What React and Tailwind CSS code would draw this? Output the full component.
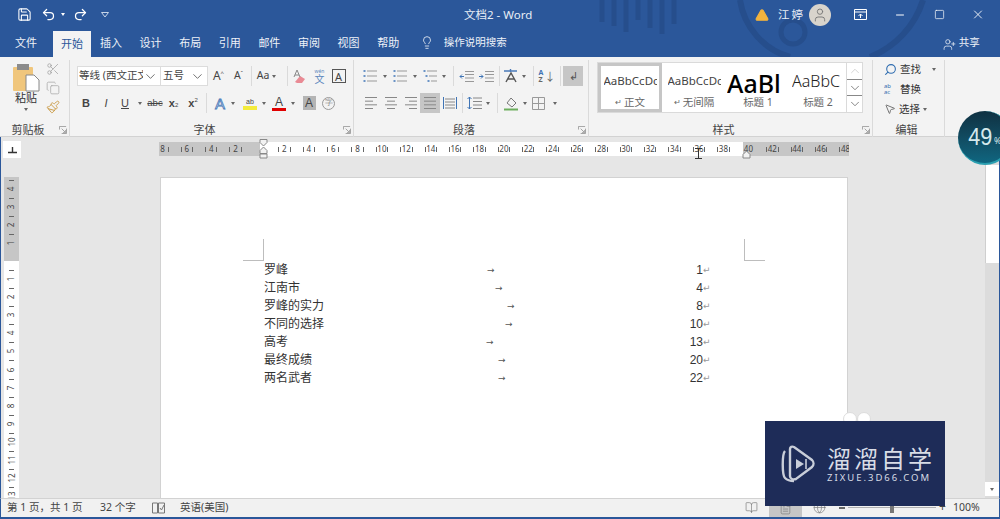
import React from "react";
import { Save, Undo2, Redo2, Lightbulb, Scissors, Copy, Paintbrush, Search, MousePointer2, X, Minus, Square, ChevronDown, ChevronUp, TriangleAlert, User, UserPlus, BookOpen, FileText, Globe } from "lucide-react";

const TABS = ["插入", "设计", "布局", "引用", "邮件", "审阅", "视图", "帮助"];

const DOC = [
  { t: "罗峰", w: "w-[223px]", n: "1" },
  { t: "江南市", w: "w-[231px]", n: "4" },
  { t: "罗峰的实力", w: "w-[243px]", n: "8" },
  { t: "不同的选择", w: "w-[241px]", n: "10" },
  { t: "高考", w: "w-[222px]", n: "13" },
  { t: "最终成绩", w: "w-[234px]", n: "20" },
  { t: "两名武者", w: "w-[234px]", n: "22" },
];

const Dd = () => <span className="inline-block h-0 w-0 border-x-[2.5px] border-t-[3px] border-x-transparent border-t-[#666]" />;

function Slot({ w, children, className = "" }) {
  return <span className={`flex h-[20px] shrink-0 items-center justify-center ${w} ${className}`}>{children}</span>;
}

const Sep = ({ ml }) => <span className={`h-[20px] w-px shrink-0 bg-[#dadada] ${ml}`} />;

function Lines({ rows }) {
  // little paragraph glyph, rows = [x1, x2] per line
  return (
    <svg width="14" height="14" viewBox="0 0 14 14" stroke="#888" strokeWidth="1">
      {rows.map((r, i) => <line key={i} x1={r[0]} x2={r[1]} y1={1.5 + i * (11 / (rows.length - 1))} y2={1.5 + i * (11 / (rows.length - 1))} />)}
    </svg>
  );
}

function ListIcon({ marks }) {
  return (
    <svg width="14" height="14" viewBox="0 0 14 14">
      {[2, 7, 12].map((y, i) => (
        <g key={y}>
          <rect x={marks * i + 0.5} y={y - 1} width="2" height="2" fill="#6b93c6" />
          <line x1={marks * i + 4} x2="14" y1={y} y2={y} stroke="#999" />
        </g>
      ))}
    </svg>
  );
}

function Group({ w, label, pad = "pr-[14px]", launcher = true, children }) {
  return (
    <div className={`flex h-[77px] shrink-0 flex-col border-r border-[#dadada] ${w}`}>
      <div className="h-[62px]">{children}</div>
      <div className={`relative flex-1 pt-px text-center text-[11px] leading-[14px] text-[#444] ${pad}`}>
        {label}
        {launcher && (
          <svg className="absolute bottom-[3px] right-[2px]" width="8" height="8" viewBox="0 0 9 9" fill="none" stroke="#999">
            <path d="M.5 4V.5H8M8.5 3v5.5H3M3 3l4 4M4.5 7.5h3v-3" />
          </svg>
        )}
      </div>
    </div>
  );
}

function StyleItem({ sample, label, mark, first, big }) {
  return (
    <div className={`flex h-full w-[64px] shrink-0 flex-col items-center overflow-hidden ${first ? "border-[3px] border-[#c6c6c6] pt-[5px]" : "pt-[8px]"}`}>
      <div className={`h-[24px] w-[53px] overflow-hidden whitespace-nowrap ${big ? "-ml-[9px] text-[25px] font-medium leading-[24px] text-black" : "text-[11.5px] leading-[20px] text-[#444]"} [font-family:'Noto_Sans',sans-serif]`}>{sample}</div>
      <div className="flex items-center text-[10.5px] leading-[14px] text-[#666]">
        {mark && <span className="mr-[2px] text-[8px]">↵</span>}
        {label}
      </div>
    </div>
  );
}

function HRuler() {
  const Cell = ({ n }) => (
    <span className="relative flex w-[24.4px] shrink-0 justify-center">
      <span className="absolute left-[6px] top-[5px] h-[5px] w-px bg-[#666]" />
      <span className="absolute right-[6px] top-[5px] h-[5px] w-px bg-[#666]" />
      {n}
    </span>
  );
  return (
    <div className="relative ml-[138px] mt-[5px] flex h-[14px] w-[690px] text-[8px] leading-[14px] text-[#444]">
      <div className="flex w-[101px] shrink-0 justify-end overflow-hidden bg-[#c6c6c6]">
        {[8, 6, 4, 2].map(n => <Cell key={n} n={n} />)}
        <span className="w-[12.2px] shrink-0" />
      </div>
      <div className="flex w-[483px] shrink-0 overflow-hidden bg-white">
        <span className="w-[12.2px] shrink-0" />
        {[2, 4, 6, 8, 10, 12, 14, 16, 18, 20, 22, 24, 26, 28, 30, 32, 34, 36, 38].map(n => <Cell key={n} n={n} />)}
      </div>
      <div className="flex w-[106px] shrink-0 overflow-hidden bg-[#c6c6c6]">
        <span className="flex w-[10px] shrink-0 justify-end">40</span>
        <span className="w-[7.2px] shrink-0" />
        {[42, 44, 46, 48].map(n => <Cell key={n} n={n} />)}
      </div>
      {/* indent markers */}
      <svg className="absolute left-[100px] top-[-3px]" width="9" height="22" viewBox="0 0 9 22" fill="#f2f2f2" stroke="#888">
        <path d="M1 .5h7v3L4.500 7 1 3.500z" />
        <path d="M4.500 8L8 11.500v3H1v-3z" />
        <path d="M1 15h7v4H1z" />
      </svg>
      <svg className="absolute left-[583px] top-[8px]" width="9" height="9" viewBox="0 0 9 9" fill="#f2f2f2" stroke="#888">
        <path d="M4.500 1L8 4.500V8H1V4.500z" />
      </svg>
      {/* text cursor */}
      <svg className="absolute left-[536px] top-[6px]" width="7" height="11" viewBox="0 0 7 11" fill="none" stroke="#333">
        <path d="M0 .5h7M3.500 .5v10M0 10.500h7" />
      </svg>
    </div>
  );
}

function VRuler() {
  const Cell = ({ n }) => (
    <span className="relative flex h-[18.1px] shrink-0 items-center justify-center">
      <span className="absolute left-[5px] top-0 h-px w-[5px] bg-[#666]" />
      <span className="-rotate-90">{n}</span>
    </span>
  );
  return (
    <div className="ml-[3px] flex h-[321px] w-[15px] shrink-0 flex-col overflow-hidden text-[8px] leading-[8px] text-[#444]">
      <div className="flex h-[84px] shrink-0 flex-col justify-end bg-[#c6c6c6] pb-[9px]">
        {[4, 3, 2, 1].map(n => <Cell key={n} n={n} />)}
      </div>
      <div className="flex-1 bg-white pt-[9px]">
        {[1, 2, 3, 4, 5, 6, 7, 8, 9, 10, 11, 12, 13].map(n => <Cell key={n} n={n} />)}
      </div>
    </div>
  );
}

export default function App() {
  return (
    <div className="relative flex h-[519px] w-[1000px] flex-col overflow-hidden bg-[#e6e6e6] text-[#333] [font-family:'Noto_Sans','Noto_Sans_CJK_SC',sans-serif]">
      {/* title bar + tabs */}
      <div className="relative h-[57px] shrink-0 bg-[#2b579a] text-white">
        <svg className="absolute left-[590px] top-0" width="350" height="57" viewBox="0 0 350 57" fill="none" stroke="#264e8c">
          <g strokeWidth="5">
            <path d="M12 0v22M24 0v26M36 0v32M48 0v20M60 0v28M72 0v34M84 0v24" />
          </g>
          <circle cx="203" cy="32" r="12" strokeWidth="5" />
          <path d="M150 0a70 70 0 0 0 50 57M333 0a90 90 0 0 1-53 57" strokeWidth="6" />
        </svg>
        <div className="relative flex h-[29px] items-center">
          <Slot w="w-[16px]" className="ml-[16px]"><Save size={15} strokeWidth={1.7} /></Slot>
          <Slot w="w-[16px]" className="ml-[8px]"><Undo2 size={15} strokeWidth={2} /></Slot>
          <Slot w="w-[6px]" className="ml-[4px]"><span className="inline-block h-0 w-0 border-x-[2.5px] border-t-[3px] border-x-transparent border-t-white" /></Slot>
          <Slot w="w-[16px]" className="ml-[6px]"><Redo2 size={15} strokeWidth={2} /></Slot>
          <Slot w="w-[8px]" className="ml-[13px]">
            <svg width="8" height="6" viewBox="0 0 8 6" fill="none" stroke="#c6d4e8"><path d="M.5.5h7L4 5z" /></svg>
          </Slot>
          <div className="ml-[355px] w-[71px] whitespace-nowrap text-[11.5px] text-[#e8eef6]">文档2 - Word</div>
          <Slot w="w-[14px]" className="ml-[220px]"><TriangleAlert size={14} fill="#f2b33d" stroke="#f2b33d" /></Slot>
          <span className="ml-[9px] text-[11.5px] tracking-[2px] text-[#e8eef6]">江婷</span>
          <span className="ml-[4px] flex h-[22px] w-[22px] items-center justify-center rounded-full bg-[#d8d4cc]"><User size={16} stroke="#777" strokeWidth={1.4} /></span>
          <Slot w="w-[14px]" className="ml-[22px]">
            <svg width="13" height="11" viewBox="0 0 13 11" fill="none" stroke="#fff"><path d="M.5.5h12v10H.5zM.5 3h12" /><path d="M6.5 9V5M4.5 7l2-2 2 2" /></svg>
          </Slot>
          <Slot w="w-[12px]" className="ml-[27px]"><Minus size={12} /></Slot>
          <Slot w="w-[11px]" className="ml-[28px]"><Square size={11} strokeWidth={1.5} /></Slot>
          <Slot w="w-[14px]" className="ml-[26px]"><X size={15} strokeWidth={1.5} /></Slot>
        </div>
        <div className="relative flex h-[28px] items-end text-[11px] text-[#eef2f8]">
          <span className="mb-[6px] ml-[15px] w-[38px]">文件</span>
          <span className="flex h-[26px] w-[38px] items-center justify-center bg-[#f3f3f3] text-[#2b579a]">开始</span>
          {TABS.map(t => <span key={t} className="mb-[6px] w-[39.6px] pl-[9px]">{t}</span>)}
          <Slot w="w-[14px]" className="mb-[5px] ml-[12px]"><Lightbulb size={15} strokeWidth={1.4} /></Slot>
          <span className="mb-[6px] ml-[10px] text-[10.5px]">操作说明搜索</span>
          <UserPlus className="mb-[6px] ml-[436px]" size={13} strokeWidth={1.4} />
          <span className="mb-[6px] ml-[3px] text-[10.5px]">共享</span>
        </div>
      </div>

      {/* ribbon */}
      <div className="flex h-[80px] shrink-0 border-b border-[#d2d2d2] bg-[#f3f3f3] pt-[3px] text-[#444]">
        <Group w="w-[70px]" label="剪贴板" pad="pr-[13px]">
          <div className="flex">
            <div className="ml-[12px] flex w-[28px] flex-col items-center">
              <svg className="mt-[3px]" width="28" height="29" viewBox="0 0 28 29">
                <rect x="1" y="4" width="20" height="24" rx="1" fill="#f0c67c" />
                <rect x="5" y="1" width="12" height="6" fill="#8b8b8b" />
                <path d="M14 12h8l5 5v11H14z" fill="#fff" stroke="#888" />
              </svg>
              <span className="-mt-px whitespace-nowrap text-[11px] leading-[14px] text-[#333]">粘贴</span>
              <span className="mt-[3px] flex"><Dd /></span>
            </div>
            <div className="ml-[5px] flex w-[16px] flex-col items-center gap-[5px] pt-[2px]">
              <Scissors size={14} stroke="#a0a0a0" strokeWidth={1.3} />
              <Copy size={14} stroke="#a8a8a8" strokeWidth={1.3} />
              <Paintbrush size={14} stroke="#c99a45" strokeWidth={1.6} />
            </div>
          </div>
        </Group>

        <Group w="w-[284px]" label="字体">
          <div className="flex pl-[7px] pt-[6px]">
            <div className="flex h-[20px] w-[84px] shrink-0 items-center justify-between border border-[#dcdcdc] bg-white pl-[1px] pr-[2px] text-[10.5px]">
              <span className="w-[64px] overflow-hidden whitespace-nowrap">等线 (西文正文)</span>
              <ChevronDown size={15} strokeWidth={1.2} />
            </div>
            <div className="flex h-[20px] w-[47px] shrink-0 items-center justify-between border border-l-0 border-[#dcdcdc] bg-white pl-[2px] pr-[2px] text-[10.5px]">
              五号 <ChevronDown size={15} strokeWidth={1.2} />
            </div>
            <Slot w="w-[21px]" className="text-[12px]">A<span className="-mt-[6px] text-[6px]">^</span></Slot>
            <Slot w="w-[19px]" className="text-[10.5px]">A<span className="-mt-[6px] text-[6px]">ˇ</span></Slot>
            <Sep ml="ml-[3px]" />
            <Slot w="w-[29px]" className="gap-[3px] text-[10.5px]">Aa <Dd /></Slot>
            <Sep ml="ml-[6px]" />
            <Slot w="w-[20px]" className="ml-[2px]">
              <svg width="14" height="14" viewBox="0 0 14 14"><path d="M2 13l5-6 5 3-3 4H4z" fill="#e98a94" /><path d="M1 8l3-7 3 7M2 6h4" fill="none" stroke="#888" /></svg>
            </Slot>
            <Slot w="w-[19px]">
              <span className="flex flex-col items-center text-[#5b87bd]"><span className="text-[5px] leading-[6px]">wén</span><span className="text-[10px] leading-[11px]">文</span></span>
            </Slot>
            <Slot w="w-[19px]"><span className="flex h-[14px] w-[14px] items-center justify-center border border-[#555] text-[11px] leading-none">A</span></Slot>
          </div>
          <div className="mt-[7px] flex pl-[6px] [font-family:'Liberation_Sans',sans-serif]">
            <Slot w="w-[20px]" className="text-[11px] font-bold">B</Slot>
            <Slot w="w-[20px]" className="text-[11px] italic">I</Slot>
            <Slot w="w-[18px]" className="text-[11px] underline">U</Slot>
            <Slot w="w-[12px]"><Dd /></Slot>
            <Slot w="w-[18px]" className="text-[9.5px] line-through">abc</Slot>
            <Slot w="w-[19px]" className="text-[11px] font-bold">x<span className="mt-[5px] text-[6px] font-normal">2</span></Slot>
            <Slot w="w-[20px]" className="text-[11px] font-bold">x<span className="-mt-[6px] text-[6px] font-normal">2</span></Slot>
            <Sep ml="ml-[3px]" />
            <Slot w="w-[20px]" className="ml-[3px]">
              <span className="text-[15px] leading-none text-[#dfe9f6] [-webkit-text-stroke:0.8px_#4a7ab8]">A</span>
            </Slot>
            <Slot w="w-[6px]"><Dd /></Slot>
            <Slot w="w-[20px]" className="ml-[4px]">
              <span className="flex flex-col items-center text-[7px] leading-[9px]">ab<span className="h-[4px] w-[14px] bg-[#f4ec3c]" /></span>
            </Slot>
            <Slot w="w-[8px]"><Dd /></Slot>
            <Slot w="w-[20px]" className="ml-px">
              <span className="flex flex-col items-center text-[12px] leading-[12px]">A<span className="h-[3px] w-[14px] bg-[#e00000]" /></span>
            </Slot>
            <Slot w="w-[8px]"><Dd /></Slot>
            <Slot w="w-[20px]" className="ml-[2px]"><span className="flex h-[14px] w-[13px] items-center justify-center bg-[#b4b4b4] text-[12px]">A</span></Slot>
            <Slot w="w-[19px]"><span className="flex h-[13px] w-[13px] items-center justify-center rounded-full border border-[#999] text-[8px] text-[#888]">字</span></Slot>
          </div>
        </Group>

        <Group w="w-[235px]" label="段落">
          <div className="flex pl-[8px] pt-[6px]">
            <Slot w="w-[16px]"><ListIcon marks={0} /></Slot>
            <Slot w="w-[14px]"><Dd /></Slot>
            <Slot w="w-[16px]"><ListIcon marks={0} /></Slot>
            <Slot w="w-[14px]"><Dd /></Slot>
            <Slot w="w-[16px]"><ListIcon marks={2} /></Slot>
            <Slot w="w-[12px]"><Dd /></Slot>
            <Sep ml="ml-[3px]" />
            <Slot w="w-[20px]" className="ml-[2px]">
              <svg width="15" height="13" viewBox="0 0 15 13" stroke="#999"><path d="M6 1.5h9M6 4.5h9M6 8h9M6 11.5h9" /><path d="M5 6.5H1M3 4.5l-2 2 2 2" stroke="#3f74b5" fill="none" /></svg>
            </Slot>
            <Slot w="w-[20px]">
              <svg width="15" height="13" viewBox="0 0 15 13" stroke="#999"><path d="M6 1.5h9M6 4.5h9M6 8h9M6 11.5h9" /><path d="M0 6.5h4M2 4.5l2 2-2 2" stroke="#3f74b5" fill="none" /></svg>
            </Slot>
            <Sep ml="ml-[3px]" />
            <Slot w="w-[20px]">
              <svg width="15" height="14" viewBox="0 0 15 14" fill="none" stroke="#555" strokeWidth="1.4"><path d="M3 13L8 4l5 9M5 10h6" /><path d="M1 2h13M7.500 0v3" stroke="#4a7ab8" /></svg>
            </Slot>
            <Slot w="w-[8px]"><Dd /></Slot>
            <Sep ml="ml-[5px]" />
            <Slot w="w-[20px]" className="ml-[3px]">
              <span className="flex flex-col text-[7px] font-bold leading-[7px] text-[#3f74b5]">A<span className="text-[#666]">Z</span></span>
              <span className="ml-[1px] text-[11px] leading-none text-[#666]">↓</span>
            </Slot>
            <Sep ml="ml-[3px]" />
            <Slot w="w-[20px]" className="ml-[2px] bg-[#c6c6c6] text-[11px] text-[#555]">↲</Slot>
          </div>
          <div className="mt-[7px] flex pl-[7px]">
            <Slot w="w-[20px]"><Lines rows={[[1, 13], [1, 9], [1, 13], [1, 9]]} /></Slot>
            <Slot w="w-[20px]"><Lines rows={[[1, 13], [3, 11], [1, 13], [3, 11]]} /></Slot>
            <Slot w="w-[19px]"><Lines rows={[[1, 13], [5, 13], [1, 13], [5, 13]]} /></Slot>
            <Slot w="w-[20px]" className="bg-[#c6c6c6]"><Lines rows={[[1, 13], [1, 13], [1, 13], [1, 13]]} /></Slot>
            <Slot w="w-[20px]">
              <svg width="14" height="14" viewBox="0 0 14 14" stroke="#888"><path d="M2 3h10M2 6h10M2 9h10M2 12h10" /><path d="M.5 1v12M13.500 1v12" stroke="#3f74b5" /></svg>
            </Slot>
            <Sep ml="ml-[2px]" />
            <Slot w="w-[20px]" className="ml-px">
              <svg width="15" height="14" viewBox="0 0 15 14" stroke="#888"><path d="M6 2h9M6 5.500h9M6 9h9M6 12.500h9" /><path d="M2.500 1v12M.5 3l2-2 2 2M.5 11l2 2 2-2" stroke="#3f74b5" fill="none" /></svg>
            </Slot>
            <Slot w="w-[8px]"><Dd /></Slot>
            <Sep ml="ml-[5px]" />
            <Slot w="w-[20px]" className="ml-[3px]">
              <svg width="15" height="15" viewBox="0 0 15 15" fill="none" stroke="#777"><path d="M3 7l4-5 5 5-4 4z" /><path d="M0 13.500h14" stroke="#6cae5d" strokeWidth="2" /></svg>
            </Slot>
            <Slot w="w-[8px]"><Dd /></Slot>
            <Slot w="w-[18px]">
              <svg width="13" height="13" viewBox="0 0 13 13" fill="none" stroke="#999"><path d="M.5.5h12v12H.5zM6.500.5v12M.5 6.500h12" /></svg>
            </Slot>
            <Slot w="w-[16px]"><Dd /></Slot>
          </div>
        </Group>

        <Group w="w-[284px]" label="样式">
          <div className="ml-[8px] mt-[2px] flex h-[51px] w-[266px] border border-[#dadada] bg-white">
            <StyleItem first sample="AaBbCcDc" label="正文" mark />
            <StyleItem sample="AaBbCcDc" label="无间隔" mark />
            <StyleItem big sample="AaBl" label="标题 1" />
            <div className="flex h-full w-[56px] shrink-0 flex-col items-center overflow-hidden pt-[6px]">
              <div className="h-[26px] w-[52px] overflow-hidden whitespace-nowrap text-[16px] font-light leading-[24px] text-[#222] [font-family:'Noto_Sans',sans-serif]">AaBbC</div>
              <div className="text-[10.5px] leading-[14px] text-[#666]">标题 2</div>
            </div>
            <div className="ml-auto flex w-[16px] shrink-0 flex-col border-l border-[#dadada]">
              <span className="flex flex-1 items-center justify-center"><ChevronUp size={14} stroke="#c4c4c4" strokeWidth={1.2} /></span>
              <span className="flex flex-1 items-center justify-center border-y border-[#888]"><ChevronDown size={14} stroke="#555" strokeWidth={1.2} /></span>
              <span className="flex flex-1 items-center justify-center"><ChevronDown size={14} stroke="#555" strokeWidth={1.2} /></span>
            </div>
          </div>
        </Group>

        <Group w="w-[72px]" label="编辑" pad="pr-[4px]" launcher={false}>
          <div className="-mt-px flex flex-col pl-[11px] text-[10.5px] leading-[20px] text-[#333]">
            <span className="flex items-center gap-[3px]"><Search className="-scale-x-100" size={13} stroke="#2f6db0" />查找<span className="ml-[8px] flex"><Dd /></span></span>
            <span className="flex items-center gap-[3px]"><span className="w-[13px] text-[6px] leading-[6px] text-[#2f6db0]">ab<br />ac</span>替换</span>
            <span className="flex items-center gap-[3px]"><MousePointer2 size={12} stroke="#777" />选择<Dd /></span>
          </div>
        </Group>
      </div>

      {/* document area */}
      <div className="flex min-h-0 flex-1 border-x border-[#2b579a]">
        <div className="flex min-w-0 flex-1 flex-col">
          <div className="flex h-[40px] shrink-0 items-start">
            <div className="ml-[2px] mt-[4px] flex h-[17px] w-[18px] items-center justify-center bg-white">
              <svg width="9" height="8" viewBox="0 0 9 8" fill="none" stroke="#333" strokeWidth="1.4"><path d="M4.500 1v5M0 6.500h9" /></svg>
            </div>
            <HRuler />
          </div>
          <div className="flex h-[321px] shrink-0">
            <VRuler />
            <div className="ml-[141px] h-[321px] w-[688px] shrink-0 border border-b-0 border-[#d2d2d2] bg-white pt-[61px] text-[12px] text-[#333]">
              <div className="flex justify-between px-[82px]">
                <span className="h-[22px] w-[21px] border-b border-r border-[#bdbdbd]" />
                <span className="h-[22px] w-[21px] border-b border-l border-[#bdbdbd]" />
              </div>
              <div className="ml-[103px] w-[447px]">
                {DOC.map(r => (
                  <div key={r.t} className="flex h-[18px] items-center leading-[18px]">
                    <span className={`shrink-0 ${r.w}`}>{r.t}</span>
                    <span className="text-[9px] text-[#555] [font-family:'DejaVu_Sans',sans-serif]">→</span>
                    <span className="ml-auto flex items-center [font-family:'Liberation_Sans',sans-serif]">{r.n}<span className="w-[8px] text-[9px] text-[#999] [font-family:'DejaVu_Sans',sans-serif]">↵</span></span>
                  </div>
                ))}
              </div>
            </div>
          </div>
        </div>
        <div className="flex w-[14px] shrink-0 flex-col bg-[#dcdcdc]">
          <div className="mt-[28px] h-[98px] border-l border-[#cfcfcf] bg-white" />
          <div className="mb-[2px] mt-auto flex h-[14px] items-center justify-center bg-white"><Dd /></div>
        </div>
      </div>

      {/* status bar */}
      <div className="flex h-[21px] shrink-0 items-start border-x border-b-2 border-t border-[#2b579a] border-t-[#d2d2d2] bg-[#f1f1f1] text-[10.5px] leading-[17px] text-[#444]">
        <span className="ml-[6px] w-[93px]">第 1 页，共 1 页</span>
        <span className="w-[52px]">32 个字</span>
        <span className="flex h-[17px] w-[28px] items-center">
          <svg width="13" height="12" viewBox="0 0 13 12" fill="none" stroke="#777"><path d="M.5 1h5v10h-5zM6.500 1H12.500v10H6.500zM8 6l1.500 2L12 3" /></svg>
        </span>
        <span className="w-[59px] shrink-0">英语(美国)</span>
        <BookOpen className="ml-[506px] mt-[2px] shrink-0" size={13} stroke="#777" strokeWidth={1.2} />
        <span className="ml-[11px] flex h-[18px] w-[33px] shrink-0 items-center justify-center bg-[#c6c6c6]"><FileText size={13} stroke="#777" strokeWidth={1.2} /></span>
        <Globe className="ml-[11px] mt-[2px] shrink-0" size={13} stroke="#777" strokeWidth={1.2} />
        <span className="ml-[13px] mt-[8px] h-[1.5px] w-[6px] shrink-0 bg-[#666]" />
        <span className="ml-[3px] mt-[8px] flex h-px w-[88px] shrink-0 justify-center bg-[#b0b0b0]"><span className="-mt-[5px] h-[11px] w-[4px] bg-[#777]" /></span>
        <span className="ml-[3px] text-[12px] leading-[16px]">+</span>
        <span className="ml-[7px]">100%</span>
      </div>

      {/* corner badge */}
      <div className="absolute left-[958px] top-[111px] flex h-[54px] w-[54px] items-center justify-center rounded-full border-b-[2px] border-r-[2px] border-[#2a9fb0] bg-linear-to-b from-[#0f3142] to-[#0f6680] pl-[1px] text-[#d5e8ec]">
        <span className="scale-x-90 text-[24px] leading-none [font-family:'Liberation_Sans',sans-serif]">49</span>
        <span className="mt-[7px] text-[9px]">%</span>
      </div>

      {/* watermark */}
      <span className="absolute left-[843px] top-[412px] h-[14px] w-[14px] rounded-full border border-[#ddd] bg-white" />
      <span className="absolute left-[857px] top-[412px] h-[14px] w-[14px] rounded-full border border-[#ddd] bg-white" />
      <div className="absolute left-[765px] top-[421px] flex h-[85px] w-[180px] items-center bg-[#1e2c58] pl-[15px] text-[#d8dce6]">
        <svg width="36" height="38" viewBox="0 0 36 38" fill="none" stroke="#c9ced9" strokeWidth="2.400">
          <path d="M5 6c-3 3-3 24 0 27 3 3 8 3 9 3" />
          <path d="M10 4c0-2 2-3 4-2l18 13c2 2 2 5 0 7L16 34c-3 1-6 0-6-3z" />
          <path d="M16 14l8 5-8 5z" fill="#c9ced9" stroke="none" />
          <path d="M26 14v10" strokeWidth="1.600" />
        </svg>
        <div className="ml-[11px]">
          <div className="h-[25px] whitespace-nowrap text-[24px] leading-[25px] tracking-[3px] [font-family:'Noto_Sans_CJK_SC',sans-serif]">溜溜自学</div>
          <div className="mt-[2px] whitespace-nowrap text-[9.5px] leading-[11px] tracking-[2px] [font-family:'Noto_Sans',sans-serif]">ZIXUE.3D66.COM</div>
        </div>
      </div>
    </div>
  );
}
